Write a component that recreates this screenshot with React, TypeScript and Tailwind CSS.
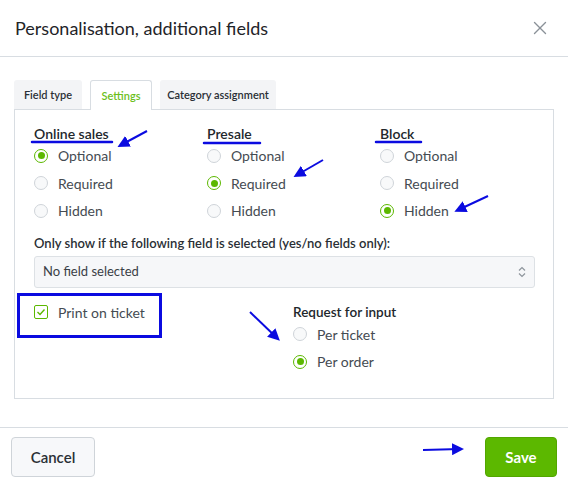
import { X } from 'lucide-react';

function Radio({ label, checked }: { label: string; checked?: boolean }) {
  return (
    <div className="flex items-center h-[27.5px] gap-[10px]">
      <span
        className={
          'w-[14px] h-[14px] rounded-full border flex items-center justify-center ' +
          (checked ? 'border-[#5cb800] bg-white' : 'border-[#cfd4d9] bg-[#f8f9fa]')
        }
      >
        {checked && <span className="w-[7px] h-[7px] rounded-full bg-[#5cb800]" />}
      </span>
      <span className="text-[14px] text-[#454b52]">{label}</span>
    </div>
  );
}

function Column({ title, selected }: { title: string; selected: number }) {
  const opts = ['Optional', 'Required', 'Hidden'];
  return (
    <div className="flex flex-col">
      <div className="text-[14px] font-semibold text-[#22272c] h-[20px] leading-[20px]">{title}</div>
      <div className="mt-[-2px]">
        {opts.map((o, i) => (
          <Radio key={o} label={o} checked={i === selected} />
        ))}
      </div>
    </div>
  );
}

export default function App() {
  return (
    <div
      className="relative w-[568px] h-[482px] bg-white overflow-hidden text-[#2a2f35]"
      style={{ fontFamily: 'Lato, "Open Sans", sans-serif' }}
    >
      {/* Header */}
      <div className="h-[57px] px-[15px] flex items-center justify-between border-b border-[#d8dde2]">
        <h1 className="text-[18px] font-normal text-[#1f2428]">Personalisation, additional fields</h1>
        <X className="w-[22px] h-[22px] text-[#8a9198] mr-[2px]" strokeWidth={1.5} />
      </div>

      {/* Body */}
      <div className="px-[14px] pt-[23px] h-[370px]">
        <div className="flex gap-[8px] h-[29px] relative z-10">
          <div className="w-[68px] bg-[#f3f4f6] rounded-t-[3px] flex items-center justify-center pt-[2px] text-[11px] font-semibold text-[#2a2f35]">
            Field type
          </div>
          <div className="w-[62px] bg-white border border-b-0 border-[#d8dde2] rounded-t-[3px] h-[30px] flex items-center justify-center pt-[2px] text-[11px] font-semibold text-[#6cc01c]">
            Settings
          </div>
          <div className="w-[116px] bg-[#f3f4f6] rounded-t-[3px] flex items-center justify-center pt-[2px] text-[11px] font-semibold text-[#2a2f35]">
            Category assignment
          </div>
        </div>
        <div className="border border-[#d8dde2] h-[290px] pl-[19px] pr-[18px] pt-[14px]">
          <div className="grid grid-cols-[173px_173px_1fr]">
            <Column title="Online sales" selected={0} />
            <Column title="Presale" selected={1} />
            <Column title="Block" selected={2} />
          </div>
          <div className="mt-[9px] text-[13px] font-semibold text-[#2a2f35] leading-[18px]">
            Only show if the following field is selected (yes/no fields only):
          </div>
          <div className="mt-[4px] h-[32px] bg-[#f6f7f9] border border-[#dde1e5] rounded-[3px] flex items-center justify-between pl-[8px] pr-[8px]">
            <span className="text-[13px] text-[#3a4046]">No field selected</span>
            <svg width="8" height="12" viewBox="0 0 8 12" className="text-[#8e959c]">
              <path d="M1 4.5 L4 1.5 L7 4.5" fill="none" stroke="currentColor" strokeWidth="1.2" />
              <path d="M1 7.5 L4 10.5 L7 7.5" fill="none" stroke="currentColor" strokeWidth="1.2" />
            </svg>
          </div>
          <div className="grid grid-cols-[259px_1fr] mt-[16px]">
            <div className="flex items-center gap-[10px] h-[17px]">
              <span className="w-[14px] h-[14px] rounded-[2px] border border-[#5cb800] flex items-center justify-center">
                <svg width="10" height="10" viewBox="0 0 10 10">
                  <path d="M1.5 5 L4 7.5 L8.5 2.5" fill="none" stroke="#5cb800" strokeWidth="1.4" />
                </svg>
              </span>
              <span className="text-[14px] text-[#454b52]">Print on ticket</span>
            </div>
            <div className="flex flex-col">
              <div className="text-[13.5px] font-semibold text-[#22272c] h-[17px] leading-[17px]">Request for input</div>
              <div className="mt-[0px]">
                <Radio label="Per ticket" />
                <Radio label="Per order" checked />
              </div>
            </div>
          </div>
        </div>
      </div>

      {/* Footer */}
      <div className="border-t border-[#d8dde2] px-[11px] pt-[9px] flex items-center justify-between">
        <button className="w-[84px] h-[40px] rounded-[4px] border border-[#cfd4d9] bg-[#f7f8fa] text-[15px] font-semibold text-[#2a2f35]">
          Cancel
        </button>
        <button className="w-[72px] h-[40px] rounded-[4px] bg-[#5cb800] border border-[#52a600] text-[15px] font-bold text-white">
          Save
        </button>
      </div>

      {/* Annotations */}
      <div className="absolute left-[17px] top-[293px] w-[145px] h-[45px] border-[3px] border-[#0b0be0]" />
      <svg className="absolute inset-0 pointer-events-none" width="568" height="482">
        <defs>
          <marker id="ah" markerWidth="6" markerHeight="6" refX="4" refY="3" orient="auto" markerUnits="strokeWidth">
            <path d="M0 0 L6 3 L0 6 Z" fill="#0b0be0" />
          </marker>
        </defs>
        <g stroke="#0b0be0" strokeWidth="2.5" strokeLinecap="round">
          <line x1="32" y1="142" x2="112" y2="142" />
          <line x1="204" y1="143" x2="260" y2="143" />
          <line x1="376" y1="142" x2="421" y2="142" />
        </g>
        <g stroke="#0b0be0" strokeWidth="2" fill="none">
          <line x1="147" y1="131" x2="121" y2="145" markerEnd="url(#ah)" />
          <line x1="323" y1="160" x2="297" y2="175" markerEnd="url(#ah)" />
          <line x1="488" y1="196" x2="458" y2="210" markerEnd="url(#ah)" />
          <line x1="250" y1="312" x2="277" y2="338" markerEnd="url(#ah)" />
          <line x1="423" y1="450" x2="460" y2="449" markerEnd="url(#ah)" />
        </g>
      </svg>
    </div>
  );
}
